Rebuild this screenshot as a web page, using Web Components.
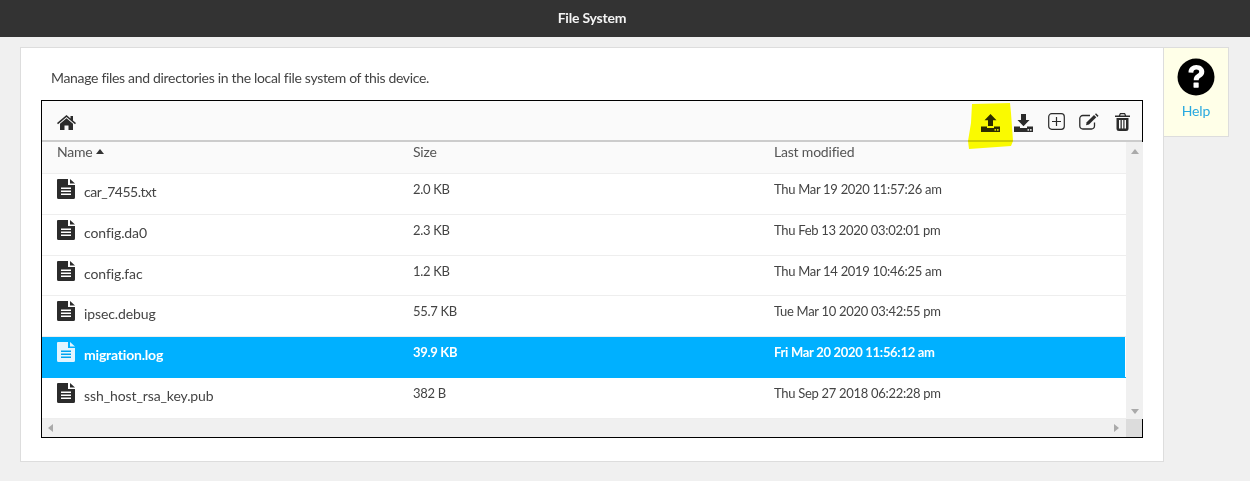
<!DOCTYPE html>
<html><head><meta charset="utf-8"><style>
html,body{margin:0;padding:0;background:#f0f0f0;font-family:"Lato","Liberation Sans",sans-serif;}
body{width:1250px;height:481px;overflow:hidden}
</style></head><body>
<fs-header>File System</fs-header>
<fs-page>
  <fs-card>
    <p slot="intro">Manage files and directories in the local file system of this device.</p>
    <fs-browser>
      <fs-row name="car_7455.txt" track="-.5px" size="2.0 KB" date="Thu Mar 19 2020 11:57:26 am"></fs-row>
      <fs-row name="config.da0" size="2.3 KB" date="Thu Feb 13 2020 03:02:01 pm"></fs-row>
      <fs-row name="config.fac" size="1.2 KB" date="Thu Mar 14 2019 10:46:25 am"></fs-row>
      <fs-row name="ipsec.debug" size="55.7 KB" date="Tue Mar 10 2020 03:42:55 pm"></fs-row>
      <fs-row selected name="migration.log" size="39.9 KB" date="Fri Mar 20 2020 11:56:12 am"></fs-row>
      <fs-row name="ssh_host_rsa_key.pub" size="382 B" date="Thu Sep 27 2018 06:22:28 pm"></fs-row>
    </fs-browser>
  </fs-card>
  <fs-help>Help</fs-help>
</fs-page>
<script>
const FONT='"Lato","Open Sans","Liberation Sans",sans-serif';
function def(name,html){
  customElements.define(name,class extends HTMLElement{
    constructor(){super();this.attachShadow({mode:'open'}).innerHTML=html;}
  });
}
def('fs-header',`<style>:host{display:flex;box-sizing:border-box;height:37px;background:#333;color:#f4f4f4;align-items:center;justify-content:center;font:700 14px ${FONT};letter-spacing:-.2px;padding:0 66px 3px 0}</style><slot></slot>`);
def('fs-page',`<style>:host{display:flex;align-items:flex-start;padding:10px 0 0 20px}</style><slot></slot>`);
def('fs-card',`<style>:host{display:block;box-sizing:border-box;width:1144px;height:415px;background:#fff;border:1px solid #ddd;padding:0 20px}
::slotted(p){margin:0;height:52px;box-sizing:border-box;padding:20px 0 0 10px;font:14px/20px ${FONT};color:#444;letter-spacing:-.32px}</style>
<slot name="intro"></slot><slot></slot>`);
def('fs-help',`<style>:host{display:flex;flex-direction:column;align-items:center;box-sizing:border-box;width:65px;height:90px;background:#ffffe8;border:1px solid #ddd;border-left:none;padding-top:10px;color:#29a9e0;font:14px/20px ${FONT};letter-spacing:-.1px}
svg{display:block;margin-bottom:5px}</style>
<svg width="38" height="38" viewBox="0 0 38 38"><circle cx="19" cy="19" r="18.5" fill="#000"/>
<path d="M11.5 14.5C11.5 9.8 15 7 19.3 7c4.5 0 8 2.8 8 6.8 0 3-1.700 4.400-3.600 5.600-1.400.9-2 1.400-2 2.900h-5c0-3.100 1.100-4.600 3-5.800 1.400-.9 2.500-1.500 2.500-2.700 0-1.300-1.200-2.200-2.800-2.200-1.900 0-3 1.100-3.100 3.100z" fill="#fff"/><rect x="16.500" y="24.500" width="5.200" height="5.200" rx=".6" fill="#fff"/></svg><slot></slot>`);
const ICO=(w,h,vb,b)=>`<svg style="margin-top:2px" width="${w}" height="${h}" viewBox="${vb}" fill="#2b2b2b">${b}</svg>`;
const tray='<path d="M0 12.500h6v1.500h7v-1.500h6V18H0z"/><rect x="13.500" y="15.200" width="1.600" height="1.400" fill="#fff"/><rect x="16" y="15.200" width="1.600" height="1.400" fill="#fff"/>';
def('fs-browser',`<style>
:host{display:block;box-sizing:border-box;width:1102px;height:338px;border:1px solid #000;background:#fff;position:relative}
.bar{display:flex;align-items:center;box-sizing:border-box;height:41px;background:#fafafa;border-bottom:2px solid #ccc;padding:0 12px 0 15px}
.bar .sp{flex:1}.tools{display:flex;align-items:center;margin-top:2px}
.tools svg{display:block}
.home{display:block;margin-top:3px}
.mid{display:flex;height:277px}
.list{width:1084px;flex:none;display:flex;flex-direction:column}
.head{display:flex;box-sizing:border-box;height:32px;background:#fafafa;border-bottom:1px solid #eee;font:14px/20px ${FONT};letter-spacing:-.2px;color:#555}
.head span{display:flex;align-items:center;height:19px}
.c1{width:371px;padding-left:15px;box-sizing:border-box}.c2{width:361px}
.tri{display:inline-block;width:0;height:0;border:4.500px solid transparent;border-top:none;border-bottom:5px solid #333;margin-left:3px}
.vs{width:17px;flex:none;background:#f0f0f0;display:flex;flex-direction:column;justify-content:space-between;align-items:center;padding:7px 0 5px;box-sizing:border-box;height:277px}
.hs{display:flex;height:18px}
.ht{width:1084px;background:#f0f0f0;display:flex;justify-content:space-between;align-items:center;padding:0 7px 0 6px;box-sizing:border-box}
.cr{flex:1;background:#dcdcdc}
i{display:block;width:0;height:0;border:4px solid transparent}
.u{border-top:none;border-bottom:5px solid #aaa}.d{border-bottom:none;border-top:5px solid #aaa}
.l{border-left:none;border-right:5px solid #aaa}.r{border-right:none;border-left:5px solid #aaa}
.hl{position:absolute;left:926px;top:2px;pointer-events:none}
</style>
<div class="bar">
<svg class="home" width="19" height="15" viewBox="0 0 19 15" fill="#2b2b2b"><path d="M9.500 0 0 8l1 1.200L9.500 2.100 18 9.200 19 8l-3-2.500V1h-2.500v2.400z"/><path d="M9.500 3.300 3 8.800V15h4.500v-4.500h4V15H16V8.800z"/></svg>
<span class="sp"></span>
<div class="tools">
${ICO(19,18,'0 0 19 18','<path d="M9.500 0l6 6.300H12V12H7V6.300H3.500z"/>'+tray)}
<span style="width:14px"></span>
${ICO(19,18,'0 0 19 18','<path d="M7 0h5v6h3.500l-6 6.300-6-6.300H7z"/>'+tray)}
<span style="width:15px"></span>
<svg width="17" height="17" viewBox="0 0 17 17" fill="none" stroke="#2b2b2b" stroke-width="1.200"><rect x=".7" y=".7" width="15.600" height="15.600" rx="3"/><path d="M8.500 4v9M4 8.500h9"/></svg>
<span style="width:14px"></span>
<svg width="20" height="17" viewBox="0 0 20 17" fill="none" stroke="#2b2b2b" stroke-width="1.300"><path d="M15.500 9.500V13a3 3 0 0 1-3 3H3.800a3 3 0 0 1-3-3V5.500a3 3 0 0 1 3-3H11"/><path fill="#2b2b2b" stroke="none" d="M7 12.300l.7-3L15 2l2.300 2.300-7.300 7.300z"/><path fill="#2b2b2b" stroke="none" d="M16 1.200 17 .3l2.500 2.500-1 1.100z"/></svg>
<span style="width:16px"></span>
<svg width="15" height="18" viewBox="0 0 15 18" fill="#2b2b2b"><path d="M5 0h5l1.200 2.500H15V4H0V2.500h3.800zM5.700 1.300l-.5 1.200h4.600l-.5-1.200z" fill-rule="evenodd"/><path d="M1.500 5h12v10.500a2.500 2.500 0 0 1-2.500 2.500H4a2.500 2.500 0 0 1-2.500-2.500zM4 7v8.500h1.500V7zm2.800 0v8.500h1.500V7zm2.700 0v8.500H11V7z" fill-rule="evenodd"/></svg>
</div></div>
<div class="mid"><div class="list">
<div class="head"><span class="c1">Name<b class="tri"></b></span><span class="c2">Size</span><span>Last modified</span></div>
<slot></slot></div>
<div class="vs"><i class="u"></i><i class="d"></i></div></div>
<div class="hs"><div class="ht"><i class="l"></i><i class="r"></i></div><div class="cr"></div></div>
<svg class="hl" width="46" height="47" viewBox="0 0 46 47"><path d="M4 1 42 0l1 10 2 28-2 5-42 3L0 38l3-18z" fill="#ffff00" style="mix-blend-mode:multiply"/></svg>`);
customElements.define('fs-row',class extends HTMLElement{
  constructor(){super();this.attachShadow({mode:'open'});}
  connectedCallback(){
    const s=this.hasAttribute('selected');
    const bg=s?'linear-gradient(to right,#00b0ff 1083px,#fff 1083px)':'#fff',fg=s?'#fff':'#444',ic=s?'#e4f5ff':'#2b2b2b',ln=s?'#00a4f0':'#fff';
    const track=this.getAttribute('track')||(s?'-.2px':'-.1px');
    this.shadowRoot.innerHTML=`<style>
:host{display:flex;box-sizing:border-box;height:41px;background:${bg};color:${fg};font:${s?'700 ':''}13px/20px ${FONT};letter-spacing:-.3px;border-bottom:1px solid ${s?'#00b0ff':'#eee'}}
.n{box-sizing:border-box;width:371px;display:flex;padding-left:15px;padding-top:5px}
svg{display:block;flex:none}
.t{margin-left:9px;padding-top:3px;font-size:14px;letter-spacing:${track}}
.s{width:361px;padding-top:5px}.d{padding-top:5px}
</style>
<div class="n"><svg width="18" height="20" viewBox="0 0 18 20"><path fill="${ic}" d="M1 0h10v6h7v12.500a1.500 1.500 0 0 1-1.500 1.500h-15A1.500 1.500 0 0 1 0 18.500V1a1 1 0 0 1 1-1z"/><path fill="${ic}" d="M13 0l5 4.500h-5z"/><path fill="${ln}" d="M4 8.500h10V10H4zM4 11.500h10V13H4zM4 14.500h10V16H4z"/></svg>
<span class="t">${this.getAttribute('name')}</span></div>
<div class="s">${this.getAttribute('size')}</div><div class="d">${this.getAttribute('date')}</div>`;
  }
});
</script>
</body></html>
